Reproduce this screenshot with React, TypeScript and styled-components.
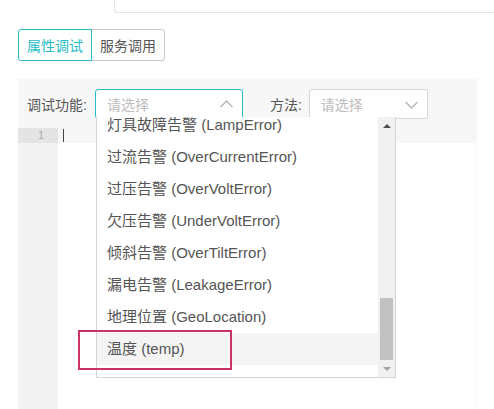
import styled, { createGlobalStyle } from 'styled-components'

const GlobalStyle = createGlobalStyle`
  html, body {
    margin: 0;
    padding: 0;
    background: #fff;
    font-family: "Liberation Sans", "Noto Sans CJK SC", sans-serif;
    font-size: 14px;
    color: #555;
  }
`

const TEAL = '#25bcc8'

const Page = styled.div`
  position: relative;
  width: 494px;
  height: 409px;
  overflow: hidden;
`

const TopCard = styled.div`
  margin-left: 114px;
  height: 12px;
  border-left: 1px solid #e6e6e6;
  border-bottom: 1px solid #e6e6e6;
  border-bottom-left-radius: 3px;
`

const Tabs = styled.div`
  display: flex;
  margin: 16px 0 0 18px;
`

const Tab = styled.div<{ active?: boolean }>`
  height: 30px;
  padding: 0 8px;
  display: flex;
  align-items: center;
  border: 1px solid ${p => (p.active ? TEAL : '#c8c8c8')};
  color: ${p => (p.active ? TEAL : '#555')};
  border-radius: ${p => (p.active ? '3px 0 0 3px' : '0 3px 3px 0')};
  margin-left: ${p => (p.active ? '0' : '-1px')};
  z-index: ${p => (p.active ? 1 : 0)};
`

const Panel = styled.div`
  margin: 18px 0 0 18px;
  width: 459px;
  height: 332px;
  background: #f7f7f7;
  display: flex;
  flex-direction: column;
`

const FormRow = styled.div`
  display: flex;
  align-items: center;
  padding: 10px 9px 9px 9px;
`

const Label = styled.span<{ gap?: number }>`
  color: #555;
  margin-right: ${p => p.gap ?? 8}px;
`

const Select = styled.div<{ width: number; focused?: boolean; gap?: number }>`
  box-sizing: border-box;
  width: ${p => p.width}px;
  height: 30px;
  background: #fff;
  border: 1px solid ${p => (p.focused ? TEAL : '#d6d6d6')};
  border-radius: 3px;
  display: flex;
  align-items: center;
  justify-content: space-between;
  padding: 0 8px 0 11px;
  margin-right: ${p => p.gap ?? 0}px;
  color: #bdbdbd;
`

const Chevron = styled.svg`
  width: 15px;
  height: 15px;
  stroke: #b5b5b5;
  fill: none;
  stroke-width: 1.3;
`

const Editor = styled.div`
  flex: 1;
  display: flex;
  margin-right: 1px;
  background: #fff;
`

const Gutter = styled.div`
  width: 40px;
  background: #f3f3f3;
`

const GutterLine = styled.div`
  height: 15px;
  background: #e4e4e4;
  font-size: 11px;
  line-height: 15px;
  color: #a8a8a8;
  text-align: right;
  padding-right: 14px;
  box-sizing: border-box;
`

const Code = styled.div`
  flex: 1;
`

const ActiveLine = styled.div`
  height: 15px;
  background: #f6f6f6;
  position: relative;
`

const Cursor = styled.span`
  position: absolute;
  left: 5px;
  top: 1px;
  width: 1px;
  height: 13px;
  background: #444;
`

const Dropdown = styled.div`
  position: absolute;
  left: 96px;
  top: 117px;
  width: 300px;
  height: 261px;
  box-sizing: border-box;
  background: #fff;
  border: 1px solid #d4d4d4;
  border-top: none;
  overflow: hidden;
  display: flex;
`

const List = styled.ul`
  list-style: none;
  margin: -8px 0 0 0;
  padding: 0;
  flex: 1;
`

const Item = styled.li<{ hovered?: boolean }>`
  height: 32px;
  line-height: 32px;
  padding-left: 10px;
  font-size: 15px;
  color: #555;
  white-space: nowrap;
  background: ${p => (p.hovered ? '#f4f4f4' : '#fff')};
`

const ScrollTrack = styled.div`
  width: 17px;
  background: #f1f1f1;
  position: relative;
  display: flex;
  flex-direction: column;
  align-items: center;
`

const Arrow = styled.div<{ down?: boolean; dim?: boolean }>`
  height: 17px;
  display: flex;
  align-items: center;
  justify-content: center;
  margin-top: ${p => (p.down ? 'auto' : '0')};
  &::after {
    content: '';
    border-left: 4px solid transparent;
    border-right: 4px solid transparent;
    ${p =>
      p.down
        ? `border-top: 4px solid ${p.dim ? '#a3a3a3' : '#505050'};`
        : `border-bottom: 4px solid ${p.dim ? '#a3a3a3' : '#505050'};`}
  }
`

const Thumb = styled.div`
  position: absolute;
  left: 2px;
  right: 2px;
  top: 181px;
  height: 62px;
  background: #c1c1c1;
`

const Highlight = styled.div`
  position: absolute;
  left: 78px;
  top: 330px;
  width: 154px;
  height: 40px;
  box-sizing: border-box;
  border: 2px solid #c8346a;
  pointer-events: none;
`

const options = [
  '灯具故障告警 (LampError)',
  '过流告警 (OverCurrentError)',
  '过压告警 (OverVoltError)',
  '欠压告警 (UnderVoltError)',
  '倾斜告警 (OverTiltError)',
  '漏电告警 (LeakageError)',
  '地理位置 (GeoLocation)',
  '温度 (temp)',
]

export default function App() {
  return (
    <Page>
      <GlobalStyle />
      <TopCard />
      <Tabs>
        <Tab active>属性调试</Tab>
        <Tab>服务调用</Tab>
      </Tabs>
      <Panel>
        <FormRow>
          <Label>调试功能:</Label>
          <Select width={148} focused gap={27}>
            请选择
            <Chevron viewBox="0 0 15 15">
              <path d="M1.5 10 L7.5 4 L13.5 10" />
            </Chevron>
          </Select>
          <Label gap={7}>方法:</Label>
          <Select width={119}>
            请选择
            <Chevron viewBox="0 0 15 15">
              <path d="M1.5 5 L7.5 11 L13.5 5" />
            </Chevron>
          </Select>
        </FormRow>
        <Editor>
          <Gutter>
            <GutterLine>1</GutterLine>
          </Gutter>
          <Code>
            <ActiveLine>
              <Cursor />
            </ActiveLine>
          </Code>
        </Editor>
      </Panel>
      <Dropdown>
        <List>
          {options.map((o, i) => (
            <Item key={o} hovered={i === options.length - 1}>
              {o}
            </Item>
          ))}
        </List>
        <ScrollTrack>
          <Arrow />
          <Thumb />
          <Arrow down dim />
        </ScrollTrack>
      </Dropdown>
      <Highlight />
    </Page>
  )
}
